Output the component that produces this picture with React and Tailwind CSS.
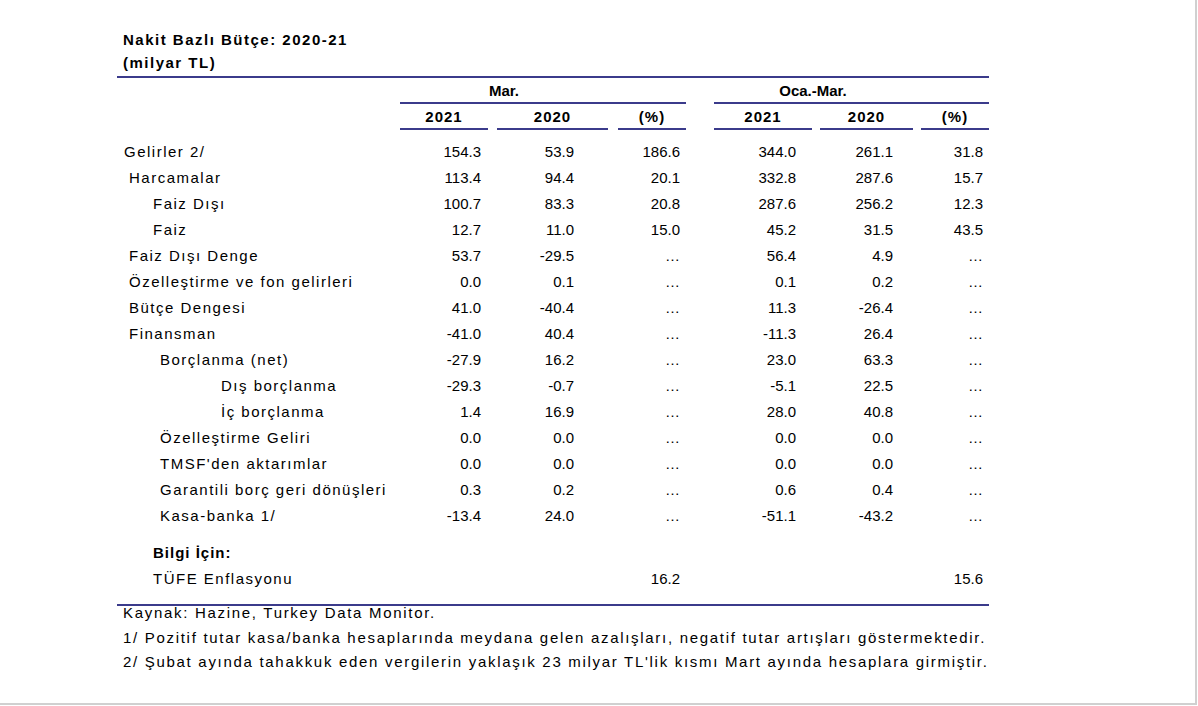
const LINE = 'border-[#3b3b8b]'

const ROWS = [
  { label: 'Gelirler 2/', pad: 'pl-[7px]', v: ['154.3', '53.9', '186.6', '344.0', '261.1', '31.8'] },
  { label: 'Harcamalar', pad: 'pl-[12px]', v: ['113.4', '94.4', '20.1', '332.8', '287.6', '15.7'] },
  { label: 'Faiz Dışı', pad: 'pl-[36px]', v: ['100.7', '83.3', '20.8', '287.6', '256.2', '12.3'] },
  { label: 'Faiz', pad: 'pl-[36px]', v: ['12.7', '11.0', '15.0', '45.2', '31.5', '43.5'] },
  { label: 'Faiz Dışı Denge', pad: 'pl-[12px]', v: ['53.7', '-29.5', '…', '56.4', '4.9', '…'] },
  { label: 'Özelleştirme ve fon gelirleri', pad: 'pl-[12px]', v: ['0.0', '0.1', '…', '0.1', '0.2', '…'] },
  { label: 'Bütçe Dengesi', pad: 'pl-[12px]', v: ['41.0', '-40.4', '…', '11.3', '-26.4', '…'] },
  { label: 'Finansman', pad: 'pl-[12px]', v: ['-41.0', '40.4', '…', '-11.3', '26.4', '…'] },
  { label: 'Borçlanma (net)', pad: 'pl-[43px]', v: ['-27.9', '16.2', '…', '23.0', '63.3', '…'] },
  { label: 'Dış borçlanma', pad: 'pl-[104px]', v: ['-29.3', '-0.7', '…', '-5.1', '22.5', '…'] },
  { label: 'İç borçlanma', pad: 'pl-[104px]', v: ['1.4', '16.9', '…', '28.0', '40.8', '…'] },
  { label: 'Özelleştirme Geliri', pad: 'pl-[43px]', v: ['0.0', '0.0', '…', '0.0', '0.0', '…'] },
  { label: "TMSF'den aktarımlar", pad: 'pl-[43px]', v: ['0.0', '0.0', '…', '0.0', '0.0', '…'] },
  { label: 'Garantili borç geri dönüşleri', pad: 'pl-[43px]', v: ['0.3', '0.2', '…', '0.6', '0.4', '…'] },
  { label: 'Kasa-banka 1/', pad: 'pl-[43px]', v: ['-13.4', '24.0', '…', '-51.1', '-43.2', '…'] },
]

// right edges of the number columns: 481, 574, 680, 796, 893, 983
const COLS = ['w-[81px]', 'w-[93px]', 'w-[106px]', 'w-[116px]', 'w-[97px]', 'w-[90px]']

function Row({ label, pad, v, bold }) {
  return (
    <div className="flex h-[26px] items-center">
      <div className={`w-[283px] whitespace-nowrap tracking-[1.5px] ${pad} ${bold ? 'font-bold tracking-[1px]' : ''}`}>{label}</div>
      {v.map((x, i) => (
        <div key={i} className={`${COLS[i]} text-right`}>{x}</div>
      ))}
    </div>
  )
}

function Head({ w, children }) {
  return <div className={`${w} border-b-2 ${LINE} text-center leading-[22px] tracking-[1px]`}>{children}</div>
}

export default function App() {
  return (
    <div className="w-[1198px] h-[706px] bg-white overflow-hidden">
      <div
        className="w-[1197px] h-[705px] border-r-2 border-b-2 border-[#d0d0d0] pl-[117px] pt-[28px] text-[15px] text-black"
        style={{ fontFamily: '"Liberation Sans", Arial, sans-serif' }}
      >
        <div className="w-[872px]">
          <div className={`border-b-2 ${LINE} pl-[6px] pb-[2px] font-bold leading-[23px] tracking-[1.5px]`}>
            <div>Nakit Bazlı Bütçe: 2020-21</div>
            <div>(milyar TL)</div>
          </div>

          <div className="flex h-[26px] items-end font-bold">
            <div className="w-[283px]" />
            <div className={`w-[286px] border-b-2 ${LINE} leading-[22px]`}>
              <div className="w-[208px] text-center">Mar.</div>
            </div>
            <div className="w-[28px]" />
            <div className={`w-[275px] border-b-2 ${LINE} leading-[22px]`}>
              <div className="w-[198px] text-center">Oca.-Mar.</div>
            </div>
          </div>

          <div className="flex h-[26px] items-end font-bold">
            <div className="w-[283px]" />
            <Head w="w-[88px]">2021</Head>
            <div className="w-[9px]" />
            <Head w="w-[111px]">2020</Head>
            <div className="w-[10px]" />
            <Head w="w-[68px]">(%)</Head>
            <div className="w-[28px]" />
            <Head w="w-[98px]">2021</Head>
            <div className="w-[8px]" />
            <Head w="w-[93px]">2020</Head>
            <div className="w-[8px]" />
            <Head w="w-[68px]">(%)</Head>
          </div>

          <div className="pt-[9px]">
            {ROWS.map((r, i) => <Row key={i} {...r} />)}
          </div>

          <div className={`pt-[11px] border-b-2 ${LINE} pb-[12px]`}>
            <Row label="Bilgi İçin:" pad="pl-[36px]" v={['', '', '', '', '', '']} bold />
            <Row label="TÜFE Enflasyonu" pad="pl-[36px]" v={['', '', '16.2', '', '', '15.6']} />
          </div>

          <div className="-mt-[5px] pl-[6px] leading-[24.5px] whitespace-nowrap tracking-[1.7px]">
            <div>Kaynak: Hazine, Turkey Data Monitor.</div>
            <div>1/ Pozitif tutar kasa/banka hesaplarında meydana gelen azalışları, negatif tutar artışları göstermektedir.</div>
            <div>2/ Şubat ayında tahakkuk eden vergilerin yaklaşık 23 milyar TL'lik kısmı Mart ayında hesaplara girmiştir.</div>
          </div>
        </div>
      </div>
    </div>
  )
}
